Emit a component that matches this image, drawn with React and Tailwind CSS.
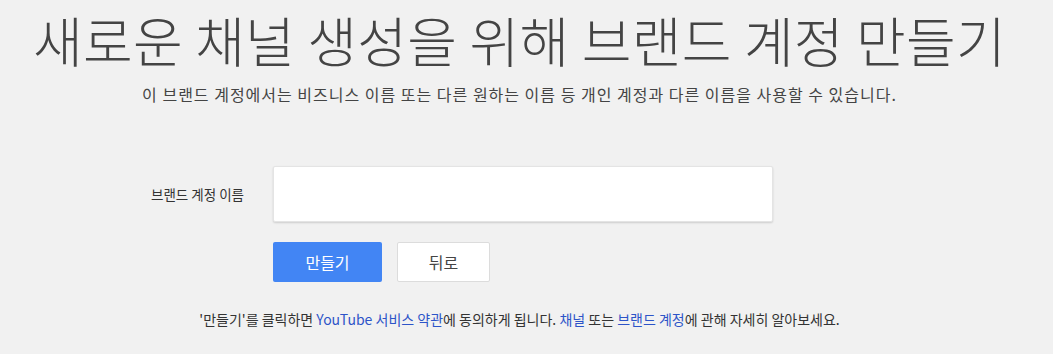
export default function App() {
  const font = { fontFamily: '"Noto Sans CJK KR", "Noto Sans", sans-serif' };

  return (
    <div className="w-[1053px] h-[354px] bg-[#f1f1f1] text-[#333] overflow-hidden" style={font}>
      {/* heading */}
      <div className="flex flex-col items-center pt-[6px]">
        <h1 className="text-[54px] leading-[68px] font-light text-[#444] tracking-[0.3px] -ml-[14px]">
          새로운 채널 생성을 위해 브랜드 계정 만들기
        </h1>
        <p className="mt-[10px] text-[16px] leading-[20px] text-[#444] tracking-[1px] -ml-[14px]">
          이 브랜드 계정에서는 비즈니스 이름 또는 다른 원하는 이름 등 개인 계정과 다른 이름을 사용할 수 있습니다.
        </p>
      </div>

      {/* form */}
      <div className="mt-[62px] grid grid-cols-[244px_500px] gap-x-[29px] gap-y-[20px] items-center">
        <label className="text-right text-[13.5px] text-[#333]">브랜드 계정 이름</label>
        <input
          type="text"
          className="h-[56px] bg-white rounded-[2px] shadow-[0_1px_2px_rgba(0,0,0,0.15)] border border-[#e4e4e4] outline-none px-3"
        />
        <div />
        <div className="flex gap-[15px]">
          <button className="w-[109px] h-[40px] bg-[#4285f4] text-white text-[16px] rounded-[2px]">
            만들기
          </button>
          <button className="w-[93px] h-[40px] bg-white text-[#444] text-[16px] rounded-[2px] border border-[#dcdcdc]">
            뒤로
          </button>
        </div>
      </div>

      {/* footer note */}
      <p className="mt-[27px] text-center text-[14px] text-[#333] -ml-[14px]">
        '만들기'를 클릭하면 <a className="text-[#2d54c8]">YouTube 서비스 약관</a>에 동의하게 됩니다.{' '}
        <a className="text-[#2d54c8]">채널</a> 또는 <a className="text-[#2d54c8]">브랜드 계정</a>에 관해 자세히 알아보세요.
      </p>
    </div>
  );
}
